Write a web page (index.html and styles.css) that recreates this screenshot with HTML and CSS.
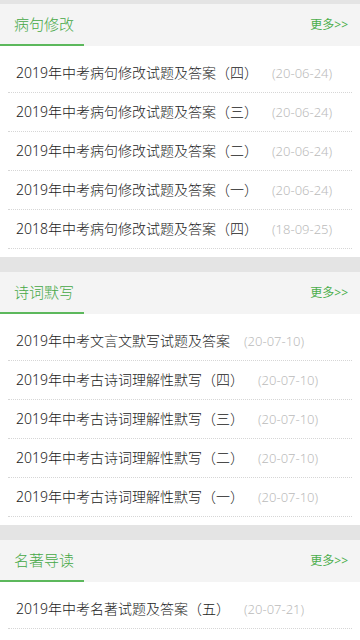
FILE: index.html
```html
<!DOCTYPE html>
<html lang="zh-CN">

<head>
    <meta charset="UTF-8">
    <meta name="viewport" content="width=device-width, initial-scale=1.0">
    <title>中考语文</title>
    <link rel="stylesheet" href="styles.css">
</head>

<body>
    <div class="section">
        <div class="section-head">
            <h2 class="section-title">病句修改</h2>
            <a class="more" href="#">更多&gt;&gt;</a>
        </div>
        <ul class="news-list">
            <li><a href="#">2019年中考病句修改试题及答案（四）</a><span class="date">(20-06-24)</span></li>
            <li><a href="#">2019年中考病句修改试题及答案（三）</a><span class="date">(20-06-24)</span></li>
            <li><a href="#">2019年中考病句修改试题及答案（二）</a><span class="date">(20-06-24)</span></li>
            <li><a href="#">2019年中考病句修改试题及答案（一）</a><span class="date">(20-06-24)</span></li>
            <li><a href="#">2018年中考病句修改试题及答案（四）</a><span class="date">(18-09-25)</span></li>
        </ul>
    </div>

    <div class="section">
        <div class="section-head">
            <h2 class="section-title">诗词默写</h2>
            <a class="more" href="#">更多&gt;&gt;</a>
        </div>
        <ul class="news-list">
            <li><a href="#">2019年中考文言文默写试题及答案</a><span class="date">(20-07-10)</span></li>
            <li><a href="#">2019年中考古诗词理解性默写（四）</a><span class="date">(20-07-10)</span></li>
            <li><a href="#">2019年中考古诗词理解性默写（三）</a><span class="date">(20-07-10)</span></li>
            <li><a href="#">2019年中考古诗词理解性默写（二）</a><span class="date">(20-07-10)</span></li>
            <li><a href="#">2019年中考古诗词理解性默写（一）</a><span class="date">(20-07-10)</span></li>
        </ul>
    </div>

    <div class="section">
        <div class="section-head">
            <h2 class="section-title">名著导读</h2>
            <a class="more" href="#">更多&gt;&gt;</a>
        </div>
        <ul class="news-list">
            <li><a href="#">2019年中考名著试题及答案（五）</a><span class="date">(20-07-21)</span></li>
        </ul>
    </div>
</body>

</html>
```

FILE: styles.css
```css
body {
    margin: 0;
    padding-top: 4px;
    font-family: "Noto Sans", "Noto Sans CJK SC", sans-serif;
    background-color: #e4e4e4;
    color: #222;
}

a {
    text-decoration: none;
    color: inherit;
}

.section {
    background-color: #fff;
    margin-bottom: 15px;
}

.section:last-child {
    padding-bottom: 10px;
}

.section-head {
    display: flex;
    justify-content: space-between;
    align-items: center;
    height: 42px;
    background-color: #f4f4f4;
}

.section-title {
    margin: 0;
    height: 42px;
    width: 84px;
    box-sizing: border-box;
    padding-left: 14px;
    border-bottom: 2px solid #5cb85c;
    font-size: 15px;
    font-weight: 300;
    line-height: 40px;
    color: #45a845;
}

.more {
    font-size: 12px;
    color: #4cae4c;
    padding-right: 12px;
    padding-bottom: 2px;
}

.news-list {
    list-style: none;
    margin: 0;
    padding: 8px 8px;
}

.news-list li {
    height: 38px;
    line-height: 38px;
    padding-left: 8px;
    border-bottom: 1px dotted #d6d6d6;
    font-size: 14px;
    font-weight: 300;
    white-space: nowrap;
    overflow: hidden;
}

.date {
    margin-left: 14px;
    font-size: 13px;
    color: #bbb;
}
```
